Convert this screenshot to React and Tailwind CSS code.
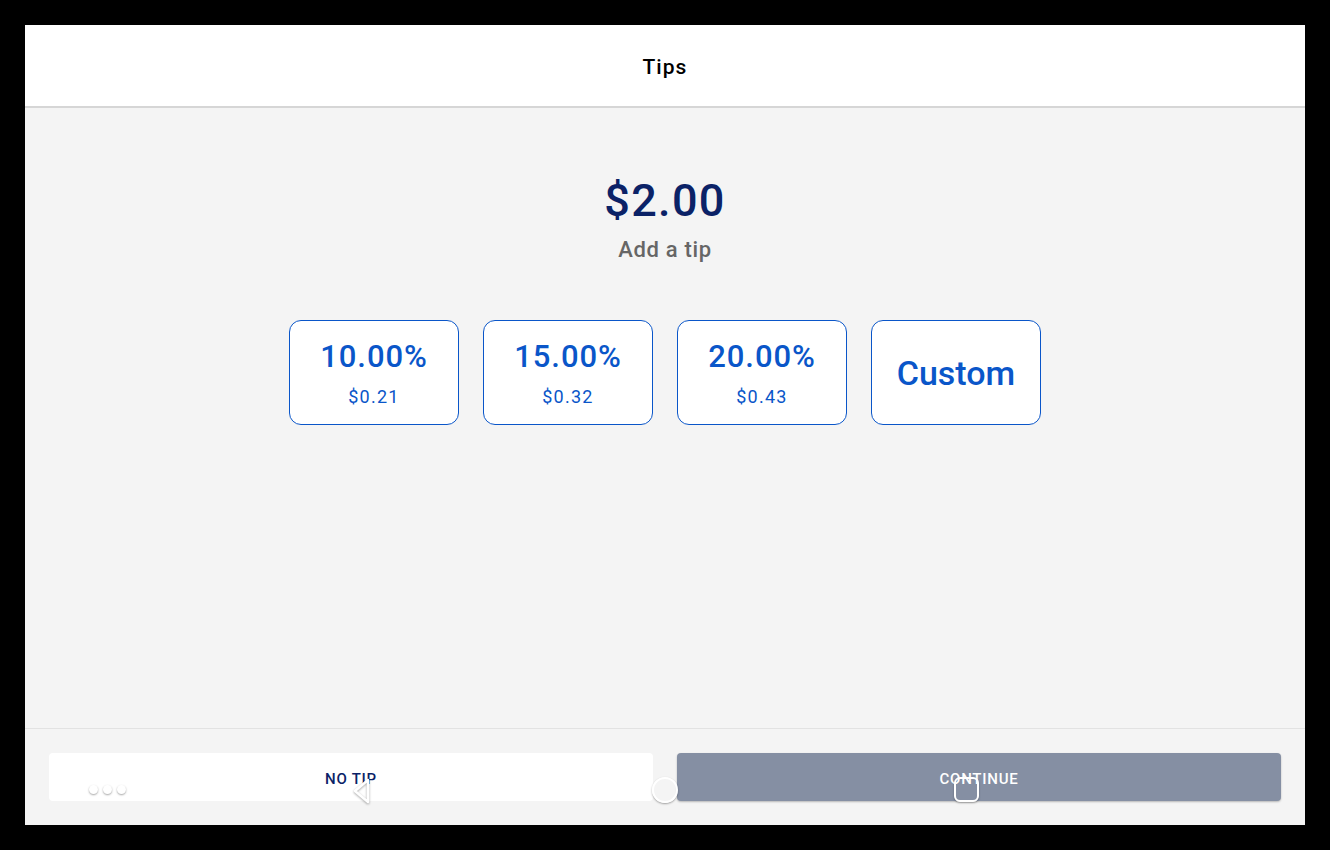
import React from "react";

const tips = [
  { pct: "10.00%", amount: "$0.21" },
  { pct: "15.00%", amount: "$0.32" },
  { pct: "20.00%", amount: "$0.43" },
];

function TipCard({ pct, amount }) {
  return (
    <button className="w-[170px] h-[105px] pt-[20px] bg-white border border-[#0a56c9] rounded-[12px] flex flex-col items-center text-[#0a56c9]">
      <span className="text-[31px] leading-none font-medium tracking-[0.03em]">{pct}</span>
      <span className="text-[18px] leading-none mt-[16px] tracking-[0.07em]">{amount}</span>
    </button>
  );
}

// android soft keys drawn over the footer
function NavKeys() {
  return (
    <div className="absolute inset-0 pointer-events-none">
      <div className="absolute left-[64px] top-[56px] flex gap-[5px]">
        <span className="w-[9px] h-[9px] rounded-full bg-white shadow-[0_1px_2px_rgba(0,0,0,0.35)]" />
        <span className="w-[9px] h-[9px] rounded-full bg-white shadow-[0_1px_2px_rgba(0,0,0,0.35)]" />
        <span className="w-[9px] h-[9px] rounded-full bg-white shadow-[0_1px_2px_rgba(0,0,0,0.35)]" />
      </div>
      <svg className="absolute left-[324px] top-[46px]" width="26" height="32" viewBox="0 0 26 32">
        <path d="M19 5 L6 16 L19 27 Z" fill="none" stroke="white" strokeWidth="2.5" strokeLinejoin="round" style={{ filter: "drop-shadow(0 1px 1px rgba(0,0,0,0.35))" }} />
      </svg>
      <span className="absolute left-[627px] top-[48px] w-[26px] h-[26px] rounded-full border-[2.5px] border-white shadow-[0_1px_2px_rgba(0,0,0,0.35)]" />
      <span className="absolute left-[929px] top-[48px] w-[25px] h-[25px] rounded-[6px] border-[2.5px] border-white shadow-[0_1px_2px_rgba(0,0,0,0.35)]" />
    </div>
  );
}

export default function App() {
  return (
    <div className="w-[1330px] h-[850px] bg-black p-[25px] font-['Roboto',sans-serif]">
      <div className="w-[1280px] h-[800px] flex flex-col bg-[#f4f4f4]">
        <div className="h-[83px] bg-white border-b-2 border-[#d6d6d6] flex items-center justify-center">
          <span className="text-[21px] font-medium text-black mt-[5px] tracking-[0.05em]">Tips</span>
        </div>

        <div className="flex-1 flex flex-col items-center">
          <div className="text-[45px] font-medium text-[#0b2267] leading-none mt-[70px] tracking-[0.03em]">$2.00</div>
          <div className="text-[22px] font-medium text-[#666666] mt-[10px] tracking-[0.03em]">Add a tip</div>

          <div className="flex gap-[24px] mt-[54px]">
            {tips.map((t) => (
              <TipCard key={t.pct} {...t} />
            ))}
            <button className="w-[170px] h-[105px] bg-white border border-[#0a56c9] rounded-[12px] flex items-center justify-center text-[#0a56c9]">
              <span className="text-[34px] font-medium leading-none">Custom</span>
            </button>
          </div>
        </div>

        <div className="relative h-[97px] border-t border-[#e2e2e2] flex gap-[24px] px-[24px] pt-[24px]">
          <button className="flex-1 h-[48px] pt-[4px] bg-white rounded-[4px] text-[15px] font-medium tracking-[0.05em] text-[#0b2267]">
            NO TIP
          </button>
          <button className="flex-1 h-[48px] pt-[4px] bg-[#858fa3] rounded-[4px] shadow-[0_1px_2px_rgba(0,0,0,0.25)] text-[15px] font-medium tracking-[0.05em] text-white">
            CONTINUE
          </button>
          <NavKeys />
        </div>
      </div>
    </div>
  );
}
